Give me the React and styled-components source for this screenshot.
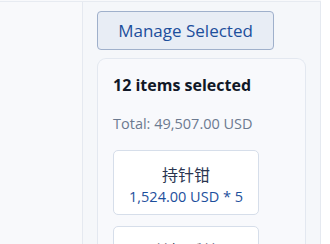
import React from "react";
import styled, { createGlobalStyle } from "styled-components";

const Global = createGlobalStyle`
  html, body { margin: 0; padding: 0; background: #ffffff; }
  body { font-family: "Open Sans", "Noto Sans", "Noto Sans CJK SC", sans-serif; }
  * { box-sizing: border-box; }
`;

const Page = styled.div`
  width: 330px;
  height: 244px;
  overflow: hidden;
  display: flex;
  flex-direction: column;
  background: #ffffff;
`;

const TopEdge = styled.div`
  height: 2px;
  flex: none;
  border-bottom: 1px solid #e7ebf1;
  width: 321px;
  background: #f8f9fb;
`;

const Body = styled.div`
  flex: 1;
  display: flex;
  min-height: 0;
`;

const LeftPane = styled.div`
  width: 83px;
  flex: none;
  background: #f8f9fb;
  border-right: 1px solid #e5e9f0;
`;

const SidePanel = styled.div`
  width: 238px;
  flex: none;
  background: #f5f7fa;
  border-right: 1px solid #e5e9f0;
  padding: 9px 14px 0 14px;
  display: flex;
  flex-direction: column;
  align-items: flex-start;
  gap: 8px;
  overflow: hidden;
`;

const ManageButton = styled.button`
  flex: none;
  width: 177px;
  height: 39px;
  border: 1px solid #9fb0cb;
  border-radius: 4px;
  background: #e8edf5;
  color: #1d4f9c;
  font-family: "Open Sans", "Noto Sans", sans-serif;
  font-size: 17px;
  padding: 0;
  cursor: pointer;
`;

const SummaryCard = styled.div`
  flex: none;
  width: 209px;
  border: 1px solid #e3e8f0;
  border-bottom: none;
  border-radius: 9px 9px 0 0;
  background: #f8f9fc;
  padding: 14px 15px 20px 15px;
  display: flex;
  flex-direction: column;
`;

const Heading = styled.div`
  font-size: 16px;
  font-weight: 700;
  color: #111827;
  line-height: 24px;
  margin-bottom: 17px;
`;

const Total = styled.div`
  font-size: 14.5px;
  color: #6c7a90;
  line-height: 20px;
`;

const ItemList = styled.div`
  margin-top: 16px;
  display: flex;
  flex-direction: column;
  gap: 11px;
`;

const ItemCard = styled.div`
  width: 146px;
  height: 65px;
  background: #ffffff;
  border: 1px solid #d6deea;
  border-radius: 5px;
  padding-top: 4px;
  display: flex;
  flex-direction: column;
  align-items: center;
  justify-content: center;
  flex: none;
`;

const ItemName = styled.div`
  font-family: "Noto Sans CJK SC", sans-serif;
  font-size: 16px;
  color: #2b3550;
  line-height: 24px;
`;

const ItemPrice = styled.div`
  font-size: 14.5px;
  color: #1d4f9c;
  line-height: 22px;
`;

const items = [
  { name: "持针钳", price: "1,524.00 USD * 5" },
  { name: "单极弧剪", price: "1,200.00 USD * 3" },
];

export default function App() {
  return (
    <Page>
      <Global />
      <TopEdge />
      <Body>
        <LeftPane />
        <SidePanel>
          <ManageButton>Manage Selected</ManageButton>
          <SummaryCard>
            <Heading>12 items selected</Heading>
            <Total>Total: 49,507.00 USD</Total>
            <ItemList>
              {items.map((it) => (
                <ItemCard key={it.name}>
                  <ItemName>{it.name}</ItemName>
                  <ItemPrice>{it.price}</ItemPrice>
                </ItemCard>
              ))}
            </ItemList>
          </SummaryCard>
        </SidePanel>
      </Body>
    </Page>
  );
}
